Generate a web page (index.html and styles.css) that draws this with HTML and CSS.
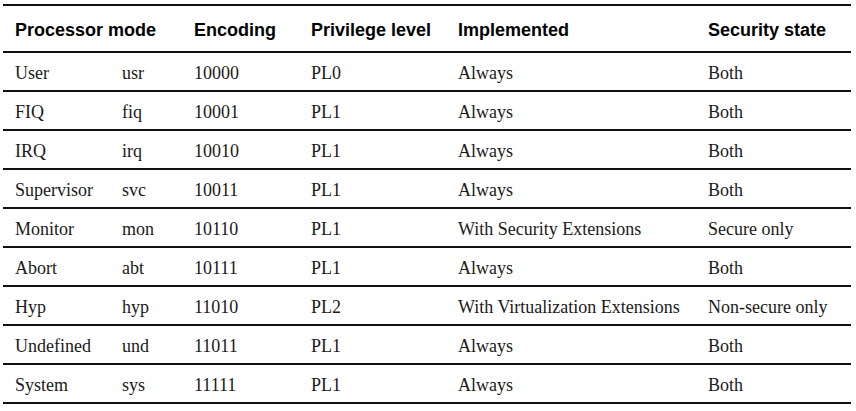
FILE: index.html
```html
<!DOCTYPE html>
<html>
<head>
<meta charset="utf-8">
<link rel="stylesheet" href="styles.css">
</head>
<body>
<table class="modes">
  <colgroup>
    <col class="c1"><col class="c2"><col class="c3"><col class="c4"><col class="c5"><col class="c6">
  </colgroup>
  <thead>
    <tr>
      <th colspan="2">Processor mode</th>
      <th>Encoding</th>
      <th>Privilege level</th>
      <th>Implemented</th>
      <th>Security state</th>
    </tr>
  </thead>
  <tbody>
    <tr><td>User</td><td>usr</td><td>10000</td><td>PL0</td><td>Always</td><td>Both</td></tr>
    <tr><td>FIQ</td><td>fiq</td><td>10001</td><td>PL1</td><td>Always</td><td>Both</td></tr>
    <tr><td>IRQ</td><td>irq</td><td>10010</td><td>PL1</td><td>Always</td><td>Both</td></tr>
    <tr><td>Supervisor</td><td>svc</td><td>10011</td><td>PL1</td><td>Always</td><td>Both</td></tr>
    <tr><td>Monitor</td><td>mon</td><td>10110</td><td>PL1</td><td>With Security Extensions</td><td>Secure only</td></tr>
    <tr><td>Abort</td><td>abt</td><td>10111</td><td>PL1</td><td>Always</td><td>Both</td></tr>
    <tr><td>Hyp</td><td>hyp</td><td>11010</td><td>PL2</td><td>With Virtualization Extensions</td><td>Non-secure only</td></tr>
    <tr><td>Undefined</td><td>und</td><td>11011</td><td>PL1</td><td>Always</td><td>Both</td></tr>
    <tr><td>System</td><td>sys</td><td>11111</td><td>PL1</td><td>Always</td><td>Both</td></tr>
  </tbody>
</table>
</body>
</html>
```

FILE: styles.css
```css
html, body {
  margin: 0;
  padding: 0;
  background: #ffffff;
}
body {
  padding: 4px 5px 0 3px;
}
.modes {
  width: 848px;
  border-collapse: collapse;
  table-layout: fixed;
  color: #1a1a1a;
}
.c1 { width: 107px; }
.c2 { width: 72px; }
.c3 { width: 117px; }
.c4 { width: 147px; }
.c5 { width: 250px; }
.c6 { width: 155px; }
.modes th,
.modes td {
  padding: 3px 0 0 12px;
  text-align: left;
  vertical-align: middle;
  white-space: nowrap;
}
.modes thead tr {
  height: 47px;
  border-top: 2px solid #111;
  border-bottom: 2px solid #111;
}
.modes th {
  font-family: "Liberation Sans", Arial, sans-serif;
  font-weight: bold;
  font-size: 18px;
  color: #000;
}
.modes tbody tr {
  height: 39px;
  border-bottom: 2px solid #111;
}
.modes td {
  font-family: "Liberation Serif", "Times New Roman", serif;
  font-size: 18px;
}
```
